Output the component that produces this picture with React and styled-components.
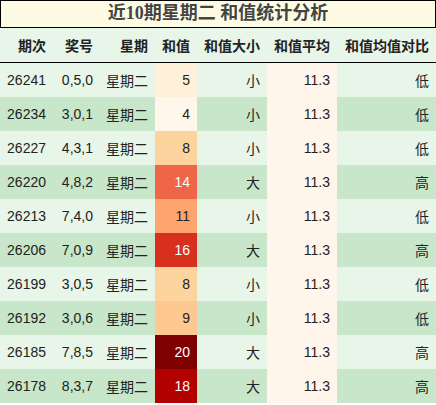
import React from 'react'
import styled, { createGlobalStyle } from 'styled-components'

const GlobalStyle = createGlobalStyle`
  html, body {
    margin: 0;
    padding: 0;
    background: #ffffff;
  }
`

const Wrapper = styled.div`
  width: 436px;
  font-family: 'Liberation Sans', 'Noto Sans CJK SC', sans-serif;
  color: #222;
`

const Title = styled.div`
  box-sizing: border-box;
  height: 28px;
  border: 1px solid #000;
  background: #fdfbe4;
  color: #444;
  font-family: 'Liberation Serif', 'Noto Sans CJK SC', serif;
  font-weight: bold;
  font-size: 18px;
  line-height: 25px;
  text-align: center;
`

const Table = styled.table`
  width: 436px;
  border-collapse: collapse;
  table-layout: fixed;
  font-size: 14px;
`

const HeadCell = styled.th`
  height: 34px;
  padding: 0 7px 0 0;
  text-align: right;
  font-weight: bold;
  background: #e8f5e9;
  border-bottom: 1px solid #000;
`

const Row = styled.tr`
  height: 34px;
  background: ${p => (p.$even ? '#c8e6c9' : '#e8f5e9')};
`

const Cell = styled.td`
  padding: 0 7px 0 0;
  text-align: right;
  background: ${p => p.$bg || 'transparent'};
  color: ${p => p.$fg || '#222'};
`

const widths = [53, 47, 55, 42, 70, 70, 99]
const headers = ['期次', '奖号', '星期', '和值', '和值大小', '和值平均', '和值均值对比']

const rows = [
  ['26241', '0,5,0', 5, '小', '低'],
  ['26234', '3,0,1', 4, '小', '低'],
  ['26227', '4,3,1', 8, '小', '低'],
  ['26220', '4,8,2', 14, '大', '高'],
  ['26213', '7,4,0', 11, '小', '低'],
  ['26206', '7,0,9', 16, '大', '高'],
  ['26199', '3,0,5', 8, '小', '低'],
  ['26192', '3,0,6', 9, '小', '低'],
  ['26185', '7,8,5', 20, '大', '高'],
  ['26178', '8,3,7', 18, '大', '高'],
]

// OrRd colour scale
const orrd = ['#fff7ec', '#fee8c8', '#fdd49e', '#fdbb84', '#fc8d59', '#ef6548', '#d7301f', '#b30000', '#7f0000']

const hex = h => [1, 3, 5].map(i => parseInt(h.slice(i, i + 2), 16))

const scale = (v, min, max) => {
  const t = ((v - min) / (max - min)) * (orrd.length - 1)
  const i = Math.min(Math.floor(t), orrd.length - 2)
  const f = t - i
  const a = hex(orrd[i])
  const b = hex(orrd[i + 1])
  const c = a.map((x, k) => Math.round(x + (b[k] - x) * f))
  const lum = (0.299 * c[0] + 0.587 * c[1] + 0.114 * c[2]) / 255
  return { bg: `rgb(${c.join(',')})`, fg: lum < 0.55 ? '#ffffff' : '#222' }
}

const sums = rows.map(r => r[2])
const min = Math.min(...sums)
const max = Math.max(...sums)

export default function App() {
  return (
    <Wrapper>
      <GlobalStyle />
      <Title>近10期星期二 和值统计分析</Title>
      <Table>
        <colgroup>
          {widths.map((w, i) => (
            <col key={i} style={{ width: w }} />
          ))}
        </colgroup>
        <thead>
          <tr>
            {headers.map(h => (
              <HeadCell key={h}>{h}</HeadCell>
            ))}
          </tr>
        </thead>
        <tbody>
          {rows.map((r, i) => {
            const c = scale(r[2], min, max)
            return (
              <Row key={r[0]} $even={i % 2 === 1}>
                <Cell>{r[0]}</Cell>
                <Cell>{r[1]}</Cell>
                <Cell>星期二</Cell>
                <Cell $bg={c.bg} $fg={c.fg}>{r[2]}</Cell>
                <Cell>{r[3]}</Cell>
                <Cell $bg="#fff5eb">11.3</Cell>
                <Cell>{r[4]}</Cell>
              </Row>
            )
          })}
        </tbody>
      </Table>
    </Wrapper>
  )
}
